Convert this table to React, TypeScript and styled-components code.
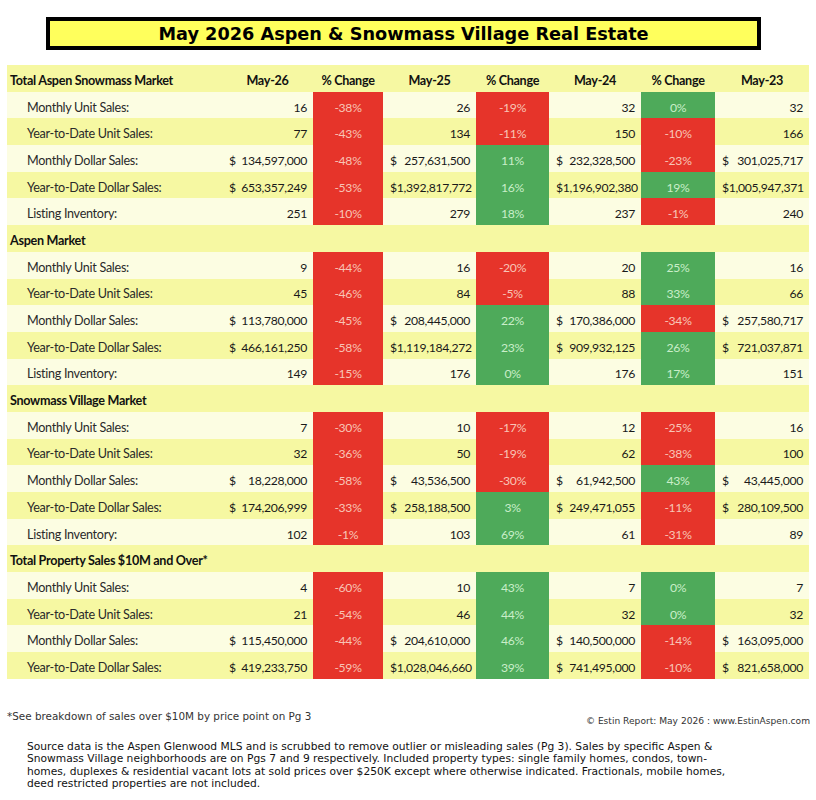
import React from "react";
import styled, { createGlobalStyle } from "styled-components";

const Global = createGlobalStyle`
  html, body { margin: 0; padding: 0; background: #ffffff; }
  #root { width: 816px; }
`;

const Page = styled.div`
  width: 816px;
  height: 800px;
  box-sizing: border-box;
  padding: 17px 7px 0 7px;
  display: flex;
  flex-direction: column;
  overflow: hidden;
`;

const TitleBox = styled.div`
  margin-left: 39px;
  width: 715px;
  height: 33px;
  box-sizing: border-box;
  border: 4px solid #000;
  background: #ffff5c;
  display: flex;
  align-items: center;
  justify-content: center;
  font-family: "DejaVu Sans", Verdana, sans-serif;
  font-weight: bold;
  font-size: 17.7px;
  color: #000;
`;

const Table = styled.div`
  margin-top: 15px;
  width: 802px;
  display: flex;
  flex-direction: column;
  font-family: Lato, "Open Sans", sans-serif;
  font-size: 12.6px;
  letter-spacing: -0.3px;
  color: #1a1a1a;
`;

const Row = styled.div<{ $dark: boolean }>`
  display: grid;
  grid-template-columns: 215px 91px 70px 93px 73px 92px 74px 94px;
  height: 26.7px;
  background: ${(p) => (p.$dark ? "#f6f8a2" : "#fcfde2")};
`;

const Cell = styled.div`
  display: flex;
  align-items: center;
  padding-top: 4px;
  box-sizing: border-box;
  white-space: nowrap;
`;

const Label = styled(Cell)<{ $section?: boolean }>`
  padding-left: ${(p) => (p.$section ? "3px" : "20px")};
  font-weight: ${(p) => (p.$section ? 700 : 400)};
  color: ${(p) => (p.$section ? "#111" : "#2a2a2a")};
`;

const HeadCell = styled(Cell)`
  justify-content: center;
  font-weight: 700;
  color: #111;
`;

const Num = styled(Cell)`
  justify-content: space-between;
  padding-left: 7px;
  padding-right: 6px;
  font-size: 12.2px;
`;

const Pct = styled(Cell)<{ $tone: "r" | "g" }>`
  justify-content: center;
  font-size: 12.2px;
  background: ${(p) => (p.$tone === "r" ? "#e6342a" : "#4eaa5a")};
  color: ${(p) => (p.$tone === "r" ? "#f8c4b6" : "#c9eec9")};
`;

type DataRow = [string, string, string, string, string, string, string, string];

type Section = { title: string; rows: DataRow[] };

const sections: Section[] = [
  {
    title: "Total Aspen Snowmass Market",
    rows: [
      ["Monthly Unit Sales:", "16", "-38%", "26", "-19%", "32", "0%", "32"],
      ["Year-to-Date Unit Sales:", "77", "-43%", "134", "-11%", "150", "-10%", "166"],
      ["Monthly Dollar Sales:", "$134,597,000", "-48%", "$257,631,500", "11%", "$232,328,500", "-23%", "$301,025,717"],
      ["Year-to-Date Dollar Sales:", "$653,357,249", "-53%", "$1,392,817,772", "16%", "$1,196,902,380", "19%", "$1,005,947,371"],
      ["Listing Inventory:", "251", "-10%", "279", "18%", "237", "-1%", "240"],
    ],
  },
  {
    title: "Aspen Market",
    rows: [
      ["Monthly Unit Sales:", "9", "-44%", "16", "-20%", "20", "25%", "16"],
      ["Year-to-Date Unit Sales:", "45", "-46%", "84", "-5%", "88", "33%", "66"],
      ["Monthly Dollar Sales:", "$113,780,000", "-45%", "$208,445,000", "22%", "$170,386,000", "-34%", "$257,580,717"],
      ["Year-to-Date Dollar Sales:", "$466,161,250", "-58%", "$1,119,184,272", "23%", "$909,932,125", "26%", "$721,037,871"],
      ["Listing Inventory:", "149", "-15%", "176", "0%", "176", "17%", "151"],
    ],
  },
  {
    title: "Snowmass Village Market",
    rows: [
      ["Monthly Unit Sales:", "7", "-30%", "10", "-17%", "12", "-25%", "16"],
      ["Year-to-Date Unit Sales:", "32", "-36%", "50", "-19%", "62", "-38%", "100"],
      ["Monthly Dollar Sales:", "$18,228,000", "-58%", "$43,536,500", "-30%", "$61,942,500", "43%", "$43,445,000"],
      ["Year-to-Date Dollar Sales:", "$174,206,999", "-33%", "$258,188,500", "3%", "$249,471,055", "-11%", "$280,109,500"],
      ["Listing Inventory:", "102", "-1%", "103", "69%", "61", "-31%", "89"],
    ],
  },
  {
    title: "Total Property Sales $10M and Over*",
    rows: [
      ["Monthly Unit Sales:", "4", "-60%", "10", "43%", "7", "0%", "7"],
      ["Year-to-Date Unit Sales:", "21", "-54%", "46", "44%", "32", "0%", "32"],
      ["Monthly Dollar Sales:", "$115,450,000", "-44%", "$204,610,000", "46%", "$140,500,000", "-14%", "$163,095,000"],
      ["Year-to-Date Dollar Sales:", "$419,233,750", "-59%", "$1,028,046,660", "39%", "$741,495,000", "-10%", "$821,658,000"],
    ],
  },
];

const NumCell: React.FC<{ v: string }> = ({ v }) => {
  if (v.startsWith("$")) {
    return (
      <Num>
        <span>$</span>
        <span>{v.slice(1)}</span>
      </Num>
    );
  }
  return (
    <Num>
      <span />
      <span>{v}</span>
    </Num>
  );
};

const tone = (v: string): "r" | "g" => (v.startsWith("-") ? "r" : "g");

const Footer = styled.div`
  margin-top: 31px;
  display: flex;
  justify-content: space-between;
  align-items: flex-end;
  font-family: "DejaVu Sans", Verdana, sans-serif;
  color: #333;
`;

const Footnote = styled.span`
  font-size: 10.4px;
`;

const Copyright = styled.span`
  font-size: 9.1px;
  margin-bottom: -4px;
  margin-right: -1px;
`;

const Source = styled.p`
  margin: 19px 0 0 20px;
  font-family: "DejaVu Sans", Verdana, sans-serif;
  font-size: 10.7px;
  line-height: 12.5px;
  color: #111;
`;

export default function App() {
  let idx = 0;
  const rows: React.ReactNode[] = [];
  rows.push(
    <Row key="head" $dark={idx++ % 2 === 0}>
      <Label $section>Total Aspen Snowmass Market</Label>
      <HeadCell>May-26</HeadCell>
      <HeadCell>% Change</HeadCell>
      <HeadCell>May-25</HeadCell>
      <HeadCell>% Change</HeadCell>
      <HeadCell>May-24</HeadCell>
      <HeadCell>% Change</HeadCell>
      <HeadCell>May-23</HeadCell>
    </Row>
  );
  sections.forEach((s, si) => {
    if (si > 0) {
      rows.push(
        <Row key={"s" + si} $dark={idx++ % 2 === 0}>
          <Label $section>{s.title}</Label>
        </Row>
      );
    }
    s.rows.forEach((r, ri) => {
      rows.push(
        <Row key={si + "-" + ri} $dark={idx++ % 2 === 0}>
          <Label>{r[0]}</Label>
          <NumCell v={r[1]} />
          <Pct $tone={tone(r[2])}>{r[2]}</Pct>
          <NumCell v={r[3]} />
          <Pct $tone={tone(r[4])}>{r[4]}</Pct>
          <NumCell v={r[5]} />
          <Pct $tone={tone(r[6])}>{r[6]}</Pct>
          <NumCell v={r[7]} />
        </Row>
      );
    });
  });

  return (
    <>
      <Global />
      <Page>
        <TitleBox>May 2026 Aspen &amp; Snowmass Village Real Estate</TitleBox>
        <Table>{rows}</Table>
        <Footer>
          <Footnote>*See breakdown of sales over $10M by price point on Pg 3</Footnote>
          <Copyright>© Estin Report: May 2026 : www.EstinAspen.com</Copyright>
        </Footer>
        <Source>
          Source data is the Aspen Glenwood MLS and is scrubbed to remove outlier or misleading sales (Pg 3). Sales by specific Aspen &amp;
          <br />
          Snowmass Village neighborhoods are on Pgs 7 and 9 respectively. Included property types: single family homes, condos, town-
          <br />
          homes, duplexes &amp; residential vacant lots at sold prices over $250K except where otherwise indicated. Fractionals, mobile homes,
          <br />
          deed restricted properties are not included.
        </Source>
      </Page>
    </>
  );
}
